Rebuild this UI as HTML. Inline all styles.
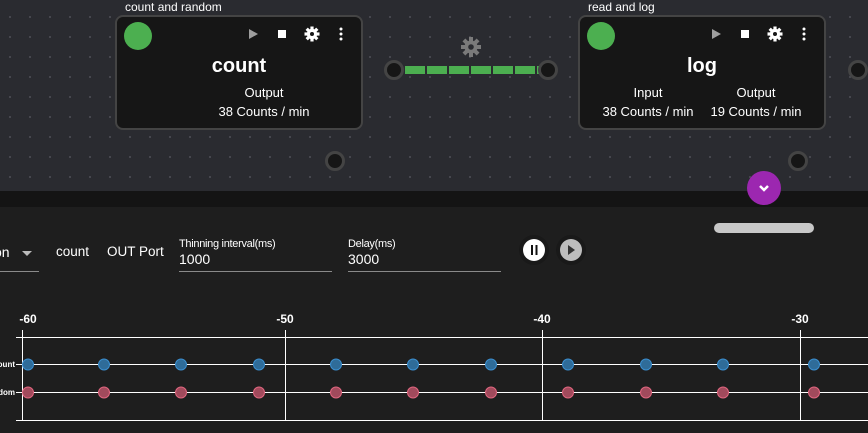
<!DOCTYPE html>
<html><head><meta charset="utf-8"><style>
*{margin:0;padding:0;box-sizing:border-box}
body{width:868px;height:433px;overflow:hidden;background:#1e1e1e;font-family:"Liberation Sans",sans-serif;color:#fff;position:relative}
.top{position:absolute;left:0;top:0;width:868px;height:191px;background-color:#2a2b30;background-image:radial-gradient(circle,#4a4b52 0.9px,transparent 1.2px);background-size:20px 20px;background-position:0px 7px}
.band{position:absolute;left:0;top:191px;width:868px;height:16px;background:#141414}
.a{position:absolute;white-space:nowrap}
.node{position:absolute;top:15px;width:248px;height:115px;background:#161616;border:2px solid #444;border-radius:8px}
.gc{position:absolute;left:7px;top:5px;width:28px;height:28px;border-radius:50%;background:#4caf50}
.ttl{position:absolute;top:55px;font-size:20px;font-weight:bold;transform:translateX(-50%)}
.sm{position:absolute;font-size:13px;transform:translateX(-50%)}
.port{position:absolute;width:20px;height:20px;border-radius:50%;background:#161616;border:3px solid #444;transform:translate(-50%,-50%)}
.lbl{font-size:11px;color:#fff;letter-spacing:-0.3px}
.val{font-size:14px}
.ul{position:absolute;height:1px;background:#8a8a8a}
</style></head><body>
<div class="top"></div>
<div class="band"></div>

<div class="a" style="left:125px;top:0px;font-size:12px">count and random</div>
<div class="a" style="left:588px;top:0px;font-size:12px">read and log</div>

<svg width="0" height="0" style="position:absolute"><defs>
<g id="icons">
<polygon points="-4,-5 5,0 -4,5" fill="#9e9e9e" transform="translate(253,34)"/>
<rect x="278" y="30" width="8" height="8" fill="#fff"/>
<g transform="translate(312,34)" fill="#fff"><circle r="5.2"/><g id="t"><rect x="-1.6" y="-7.5" width="3.2" height="15"/></g><use href="#t" transform="rotate(45)"/><use href="#t" transform="rotate(90)"/><use href="#t" transform="rotate(135)"/><circle r="2" fill="#161616"/></g>
<g fill="#fff"><circle cx="341" cy="29" r="1.5"/><circle cx="341" cy="34" r="1.5"/><circle cx="341" cy="39" r="1.5"/></g>
</g></defs></svg>

<div class="node" style="left:115px"><div class="gc"></div></div>
<div class="node" style="left:578px"><div class="gc"></div></div>
<svg class="a" style="left:0;top:0" width="868" height="191">
<use href="#icons"/>
<use href="#icons" transform="translate(463,0)"/>
<g transform="translate(471,47)" fill="#7a7a7a"><circle r="6.5"/><rect x="-2" y="-10" width="4" height="20"/><rect x="-2" y="-10" width="4" height="20" transform="rotate(45)"/><rect x="-2" y="-10" width="4" height="20" transform="rotate(90)"/><rect x="-2" y="-10" width="4" height="20" transform="rotate(135)"/><circle r="2.8" fill="#2a2b30"/></g>
<g fill="#4caf50">
<rect x="405" y="66" width="20" height="8"/><rect x="427" y="66" width="20" height="8"/><rect x="449" y="66" width="20" height="8"/><rect x="471" y="66" width="20" height="8"/><rect x="493" y="66" width="20" height="8"/><rect x="515" y="66" width="20" height="8"/><rect x="537" y="66" width="4" height="8"/>
</g>
</svg>

<div class="ttl" style="left:239px">count</div>
<div class="sm" style="left:264px;top:85px">Output</div>
<div class="sm" style="left:264px;top:104px">38 Counts / min</div>
<div class="ttl" style="left:702px">log</div>
<div class="sm" style="left:648px;top:85px">Input</div>
<div class="sm" style="left:648px;top:104px">38 Counts / min</div>
<div class="sm" style="left:756px;top:85px">Output</div>
<div class="sm" style="left:756px;top:104px">19 Counts / min</div>

<div class="port" style="left:394px;top:70px"></div>
<div class="port" style="left:548px;top:70px"></div>
<div class="port" style="left:335px;top:161px"></div>
<div class="port" style="left:798px;top:161px"></div>
<div class="port" style="left:858px;top:70px"></div>

<div class="a" style="left:747px;top:171px;width:34px;height:34px;border-radius:50%;background:#9c27b0"></div>
<svg class="a" style="left:757px;top:182px" width="14" height="12"><polyline points="3,4 7,8 11,4" fill="none" stroke="#fff" stroke-width="2.5"/></svg>
<div class="a" style="left:714px;top:223px;width:100px;height:10px;border-radius:5px;background:#c8c8c8"></div>

<div class="a val" style="left:-6px;top:244px">on</div>
<svg class="a" style="left:22px;top:250px" width="12" height="8"><polygon points="0,1 10,1 5,6" fill="#bbb"/></svg>
<div class="ul" style="left:0;top:271px;width:39px"></div>
<div class="a val" style="left:56px;top:244px;font-size:13.5px">count</div>
<div class="a val" style="left:107px;top:244px;font-size:13.5px">OUT Port</div>
<div class="a lbl" style="left:179px;top:238px">Thinning interval(ms)</div>
<div class="a val" style="left:179px;top:251px">1000</div>
<div class="ul" style="left:179px;top:271px;width:153px"></div>
<div class="a lbl" style="left:348px;top:238px">Delay(ms)</div>
<div class="a val" style="left:348px;top:251px">3000</div>
<div class="ul" style="left:348px;top:271px;width:153px"></div>

<svg class="a" style="left:0;top:0" width="868" height="433">
<circle cx="534" cy="250" r="15" fill="#191919"/>
<circle cx="571" cy="250" r="15" fill="#191919"/>
<circle cx="534" cy="250" r="11" fill="#fff"/>
<rect x="531" y="245" width="2" height="10" fill="#111"/><rect x="535.5" y="245" width="2" height="10" fill="#111"/>
<circle cx="571" cy="250" r="11" fill="#bdbdbd"/>
<polygon points="568,245 575,250 568,255" fill="#333"/>

<g font-family="Liberation Sans" font-size="12" font-weight="bold" fill="#fff" text-anchor="middle">
<text x="28" y="323">-60</text><text x="285" y="323">-50</text><text x="542" y="323">-40</text><text x="800" y="323">-30</text>
</g>
<g font-family="Liberation Sans" font-size="8" font-weight="bold" fill="#fff" text-anchor="end">
<text x="15" y="367">ount</text><text x="15" y="395">dom</text>
</g>
<g stroke="#fff" stroke-width="1">
<line x1="16" y1="337.5" x2="868" y2="337.5"/><line x1="16" y1="364.5" x2="868" y2="364.5"/><line x1="16" y1="392.5" x2="868" y2="392.5"/><line x1="16" y1="420.5" x2="868" y2="420.5"/>
<line x1="22.5" y1="330" x2="22.5" y2="421"/>
<line x1="285.5" y1="330" x2="285.5" y2="421"/><line x1="542.5" y1="330" x2="542.5" y2="421"/><line x1="800.5" y1="330" x2="800.5" y2="421"/>
</g>
<g fill="#2f6c99" stroke="#3b8fd0" stroke-width="1">
<circle cx="28" cy="364.5" r="5.5"/><circle cx="104" cy="364.5" r="5.5"/><circle cx="181" cy="364.5" r="5.5"/><circle cx="259" cy="364.5" r="5.5"/><circle cx="336" cy="364.5" r="5.5"/><circle cx="413" cy="364.5" r="5.5"/><circle cx="491" cy="364.5" r="5.5"/><circle cx="568" cy="364.5" r="5.5"/><circle cx="646" cy="364.5" r="5.5"/><circle cx="723" cy="364.5" r="5.5"/><circle cx="814" cy="364.5" r="5.5"/>
</g>
<g fill="#a14a5c" stroke="#e0667f" stroke-width="1">
<circle cx="28" cy="392.5" r="5.5"/><circle cx="104" cy="392.5" r="5.5"/><circle cx="181" cy="392.5" r="5.5"/><circle cx="259" cy="392.5" r="5.5"/><circle cx="336" cy="392.5" r="5.5"/><circle cx="413" cy="392.5" r="5.5"/><circle cx="491" cy="392.5" r="5.5"/><circle cx="568" cy="392.5" r="5.5"/><circle cx="646" cy="392.5" r="5.5"/><circle cx="723" cy="392.5" r="5.5"/><circle cx="814" cy="392.5" r="5.5"/>
</g>
</svg>
</body></html>
